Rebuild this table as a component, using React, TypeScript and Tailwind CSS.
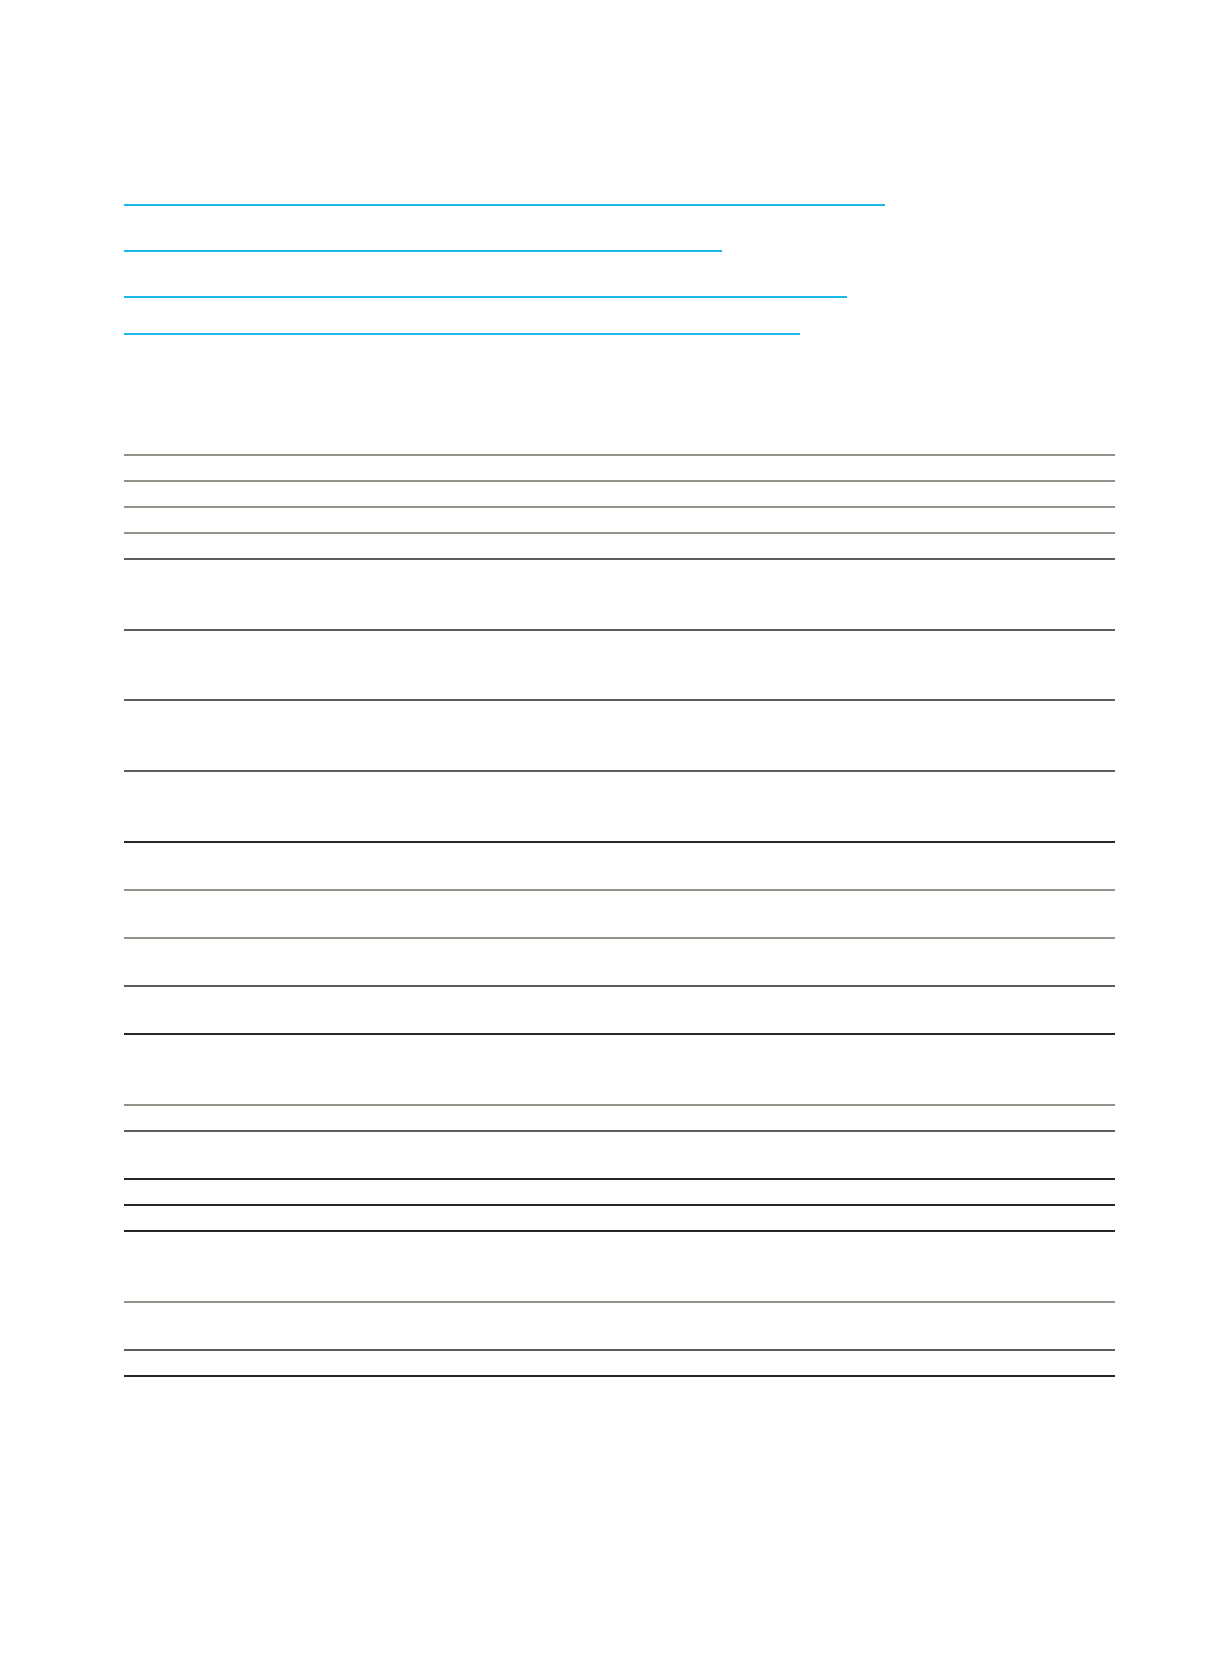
const links = [
  { w: "w-[761px]", h: "h-[46px]" },
  { w: "w-[598px]", h: "h-[46px]" },
  { w: "w-[723px]", h: "h-[46px]" },
  { w: "w-[676px]", h: "h-[37px]" },
];

// line styles under each row
const G = "border-b-2 border-[#97918c]";
const D = "border-b-2 border-[#5f5b58]";
const K = "border-b-2 border-[#2a2627]";

const rows: { h: string; line: string }[] = [
  { h: "h-[26px]", line: G },
  { h: "h-[26px]", line: G },
  { h: "h-[26px]", line: G },
  { h: "h-[26px]", line: D },
  { h: "h-[71px]", line: D },
  { h: "h-[70px]", line: D },
  { h: "h-[71px]", line: D },
  { h: "h-[71px]", line: K },
  { h: "h-[48px]", line: G },
  { h: "h-[48px]", line: G },
  { h: "h-[48px]", line: D },
  { h: "h-[48px]", line: K },
  { h: "h-[71px]", line: G },
  { h: "h-[26px]", line: D },
  { h: "h-[48px]", line: K },
  { h: "h-[26px]", line: K },
  { h: "h-[26px]", line: K },
  { h: "h-[71px]", line: G },
  { h: "h-[48px]", line: D },
  { h: "h-[26px]", line: K },
];

const cols = ["w-[297px]", "w-[87px]", "w-[86px]", "w-[87px]", "w-[103px]", "w-[88px]", "w-[97px]", "w-[80px]", "w-[66px]"];

export default function App() {
  return (
    <div className="min-h-[1671px] bg-white pl-[124px] pr-[92px] pt-[160px] font-['Liberation_Sans',sans-serif]">
      <div className="flex flex-col">
        {links.map((l, i) => (
          <a key={i} href="#" className={`block ${l.w} ${l.h} border-b-2 border-[#1bb7e8]`}></a>
        ))}
      </div>
      <div className="mt-[119px] flex w-[991px] flex-col">
        <div className="h-[2px] bg-[#97918c]"></div>
        {rows.map((r, i) => (
          <div key={i} className={`flex ${r.h} ${r.line}`}>
            {cols.map((c, j) => (
              <div key={j} className={`${c} shrink-0`}></div>
            ))}
          </div>
        ))}
      </div>
    </div>
  );
}
